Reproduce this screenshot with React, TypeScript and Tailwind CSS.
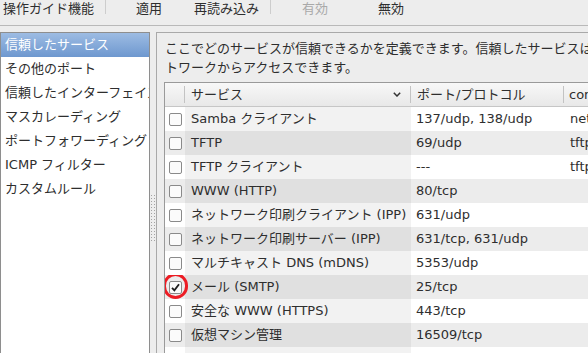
import { Fragment } from 'react'

const services = [
  { name: 'Samba クライアント', port: '137/udp, 138/udp', mod: 'netbios-ns' },
  { name: 'TFTP', port: '69/udp', mod: 'tftp' },
  { name: 'TFTP クライアント', port: '---', mod: 'tftp' },
  { name: 'WWW (HTTP)', port: '80/tcp', mod: '' },
  { name: 'ネットワーク印刷クライアント (IPP)', port: '631/udp', mod: '' },
  { name: 'ネットワーク印刷サーバー (IPP)', port: '631/tcp, 631/udp', mod: '' },
  { name: 'マルチキャスト DNS (mDNS)', port: '5353/udp', mod: '' },
  { name: 'メール (SMTP)', port: '25/tcp', mod: '', checked: true },
  { name: '安全な WWW (HTTPS)', port: '443/tcp', mod: '' },
  { name: '仮想マシン管理', port: '16509/tcp', mod: '' },
  { name: '', port: '', mod: '' },
]

const zones = [
  '信頼したサービス',
  'その他のポート',
  '信頼したインターフェイス',
  'マスカレーディング',
  'ポートフォワーディング',
  'ICMP フィルター',
  'カスタムルール',
]

const Checkbox = ({ checked }: { checked?: boolean }) => (
  <div className="w-[13px] h-[13px] border border-[#8a8a8a] rounded-[2px] bg-[#fbfbfb] flex items-center justify-center">
    {checked && (
      <svg width="11" height="11" viewBox="0 0 11 11">
        <path d="M2 5.8 L4.4 8.4 L9 2.2" fill="none" stroke="#1e1e1e" strokeWidth="1.8" />
      </svg>
    )}
  </div>
)

const Grip = () => (
  <svg width="5" height="48" className="block">
    {Array.from({ length: 16 }).map((_, i) => (
      <Fragment key={i}>
        <rect x="0" y={i * 3} width="1" height="1" fill="#a3a3a3" />
        <rect x="3" y={i * 3} width="1" height="1" fill="#a3a3a3" />
      </Fragment>
    ))}
  </svg>
)

export default function App() {
  return (
    <div className="w-[588px] h-[353px] overflow-hidden flex flex-col bg-[#ededed] text-[13px] text-[#2e2e2e] font-['DejaVu_Sans','Noto_Sans_CJK_JP',sans-serif]">
      {/* toolbar */}
      <div className="h-[26px] shrink-0 flex items-start border-b border-[#b9b9b9] leading-[17px] whitespace-nowrap">
        <span className="w-[105px] pl-[3px]">操作ガイド機能</span>
        <span className="w-px h-[14px] bg-[#cdcdcd]" />
        <span className="ml-[30px]">適用</span>
        <span className="ml-[32px]">再読み込み</span>
        <span className="ml-[11px] w-px h-[14px] bg-[#cdcdcd]" />
        <span className="ml-[31px] text-[#a9a9a9]">有効</span>
        <span className="ml-[50px]">無効</span>
      </div>

      {/* body */}
      <div className="flex-1 min-h-0 flex pt-[6px]">
        <div className="w-[150px] shrink-0 bg-white border-l border-t border-r border-[#8e8e8e] overflow-hidden">
          {zones.map((z, i) => (
            <div
              key={z}
              className={
                'h-[24px] flex items-center pl-[4px] whitespace-nowrap overflow-hidden ' +
                (i === 0 ? 'bg-gradient-to-b from-[#9dbce3] to-[#6e98cf] text-white' : '')
              }
            >
              {z}
            </div>
          ))}
        </div>

        <div className="w-[6px] shrink-0 pl-px pt-[163px]">
          <Grip />
        </div>

        <div className="flex-1 min-w-0 border-l border-t border-[#a9a9a9] pl-[7px] pt-[6px] overflow-hidden">
          <div className="leading-[19px] pl-px whitespace-nowrap">
            <div>ここでどのサービスが信頼できるかを定義できます。信頼したサービスはすべてのホストとネッ</div>
            <div>トワークからアクセスできます。</div>
          </div>

          <div className="mt-[5px] border-l border-t border-[#9a9a9a] bg-white w-[440px]">
            <div className="h-[24px] flex items-center border-b border-[#c6c6c6] bg-gradient-to-b from-[#f8f8f8] to-[#e8e8e8] whitespace-nowrap overflow-hidden">
              <div className="w-[19px] shrink-0" />
              <span className="w-px h-[17px] bg-[#c3c3c3] shrink-0" />
              <div className="w-[225px] shrink-0 pl-[6px] pr-[9px] flex items-center justify-between">
                <span>サービス</span>
                <svg width="8" height="5" viewBox="0 0 8 5">
                  <path d="M0.8 0.8 L4 4 L7.2 0.8" fill="none" stroke="#333" strokeWidth="1.5" />
                </svg>
              </div>
              <span className="w-px h-[17px] bg-[#c3c3c3] shrink-0" />
              <div className="w-[152px] shrink-0 pl-[6px]">ポート/プロトコル</div>
              <span className="w-px h-[17px] bg-[#c3c3c3] shrink-0" />
              <div className="pl-[5px]">conntrack モジュール</div>
            </div>

            {services.map((s, i) => {
              const dark = i % 2 === 1
              return (
                <div key={i} className="h-[24px] flex whitespace-nowrap overflow-hidden">
                  <div className={'w-[20px] shrink-0 flex items-center pl-[4px] relative ' + (dark ? 'bg-[#ececec]' : 'bg-white')}>
                    <Checkbox checked={s.checked} />
                    {s.checked && (
                      <div className="absolute left-[-2px] top-[-2px] w-[25px] h-[26px] rounded-full border-[3px] border-[#ec1c24]" />
                    )}
                  </div>
                  <div className={'w-[226px] shrink-0 flex items-center pl-[6px] ' + (dark ? 'bg-[#e0e0e0]' : 'bg-[#f2f2f2]')}>
                    {s.name}
                  </div>
                  <div className={'w-[153px] shrink-0 flex items-center pl-[5px] ' + (dark ? 'bg-[#ececec]' : 'bg-white')}>
                    {s.port}
                  </div>
                  <div className={'flex-1 flex items-center pl-[6px] ' + (dark ? 'bg-[#ececec]' : 'bg-white')}>
                    {s.mod}
                  </div>
                </div>
              )
            })}
          </div>
        </div>
      </div>
    </div>
  )
}
